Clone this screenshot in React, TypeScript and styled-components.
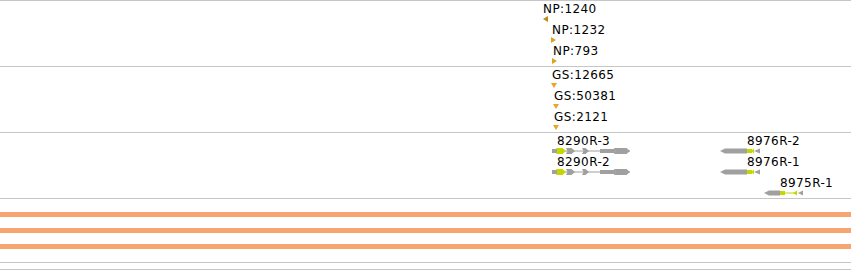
import React from "react";
import styled, { createGlobalStyle } from "styled-components";

const GlobalStyle = createGlobalStyle`
  html, body { margin: 0; padding: 0; background: #ffffff; }
  body { font-family: "DejaVu Sans", "Liberation Sans", sans-serif; }
`;

const GRAY = "#a0a0a0";
const LIME = "#c4d800";
const ROW = 21;
const GH = 6;
const MID = GH / 2;

type Shape =
  | { t: "poly"; pts: string; c: string }
  | { t: "rect"; x: number; w: number; c: string }
  | { t: "line"; x1: number; x2: number; c: string };

type Feature = {
  label: string;
  lx: number;
  gx: number;
  row: number;
  gw: number;
  gh: number;
  gap: number;
  shapes: Shape[];
  intron?: { x1: number; x2: number };
};

/* forward exon: chevron-like arrow pointing right */
const fwd = (x0: number, x1: number, c: string): Shape => ({
  t: "poly",
  pts: `${x0},0 ${x1 - 3.5},0 ${x1},${MID} ${x1 - 3.5},${GH} ${x0},${GH} ${x0 + 1.5},${MID}`,
  c,
});
const taperL = (x0: number, x1: number, c: string): Shape => ({
  t: "poly",
  pts: `${x0},${MID} ${x0 + 5},0.5 ${x1},0.5 ${x1},${GH - 0.5} ${x0 + 5},${GH - 0.5}`,
  c,
});
const triL = (x0: number, x1: number, c: string): Shape => ({
  t: "poly",
  pts: `${x1},0.5 ${x0},${MID} ${x1},${GH - 0.5}`,
  c,
});

const marker = (
  label: string,
  lx: number,
  gx: number,
  row: number,
  dir: "left" | "right" | "down",
  c: string
): Feature => {
  const pts =
    dir === "left" ? "5,0 0,3 5,6" : dir === "right" ? "0,0 5,3 0,6" : "0,0 6,0 3,5";
  return {
    label,
    lx,
    gx,
    row,
    gw: dir === "down" ? 6 : 5,
    gh: dir === "down" ? 5 : 6,
    gap: dir === "down" ? 1 : 0,
    shapes: [{ t: "poly", pts, c }],
  };
};

const gene8290 = (label: string, row: number): Feature => ({
  label,
  lx: 557,
  gx: 552,
  row,
  gw: 80,
  gh: GH,
  gap: 0,
  intron: { x1: 2, x2: 78 },
  shapes: [
    { t: "rect", x: 0, w: 5, c: GRAY },
    fwd(4, 14, LIME),
    fwd(14, 23, GRAY),
    fwd(30, 37, GRAY),
    { t: "rect", x: 48, w: 15, c: GRAY },
    fwd(62, 78, GRAY),
  ],
});

const gene8976 = (label: string, row: number): Feature => ({
  label,
  lx: 747,
  gx: 720,
  row,
  gw: 40,
  gh: GH,
  gap: 0,
  shapes: [
    taperL(0, 27, GRAY),
    { t: "rect", x: 27, w: 5, c: LIME },
    triL(31, 34, LIME),
    triL(34, 40, GRAY),
  ],
});

const gene8975: Feature = {
  label: "8975R-1",
  lx: 780,
  gx: 764,
  row: 2,
  gw: 40,
  gh: GH,
  gap: 0,
  shapes: [
    taperL(0, 16, GRAY),
    { t: "rect", x: 16, w: 5, c: LIME },
    { t: "line", x1: 21, x2: 31, c: LIME },
    triL(29, 33, LIME),
    triL(34, 39, GRAY),
  ],
};

const featureTracks: Feature[][] = [
  [
    marker("NP:1240", 543, 543, 0, "left", "#bf8a14"),
    marker("NP:1232", 552, 551, 1, "right", "#e0a01c"),
    marker("NP:793", 553, 552, 2, "right", "#e0a01c"),
  ],
  [
    marker("GS:12665", 552, 551, 0, "down", "#eda326"),
    marker("GS:50381", 554, 553, 1, "down", "#eda326"),
    marker("GS:2121", 554, 553, 2, "down", "#eda326"),
  ],
  [gene8290("8290R-3", 0), gene8976("8976R-2", 0), gene8290("8290R-2", 1), gene8976("8976R-1", 1), gene8975],
];

const Browser = styled.div`
  width: 851px;
  display: flex;
  flex-direction: column;
`;

const Track = styled.section<{ $h: number }>`
  position: relative;
  box-sizing: border-box;
  height: ${(p) => p.$h}px;
  border-top: 1px solid #c6c6c6;
  overflow: hidden;
`;

const BarTrack = styled(Track)`
  display: flex;
  flex-direction: column;
  gap: 11px;
  padding-top: 13px;
`;

const CoverageBar = styled.div`
  height: 5px;
  width: 100%;
  background: #f6a571;
`;

const FeatureBox = styled.div<{ $left: number; $top: number }>`
  position: absolute;
  left: ${(p) => p.$left}px;
  top: ${(p) => p.$top}px;
  display: flex;
  flex-direction: column;
  align-items: flex-start;
`;

const Label = styled.span<{ $dx: number }>`
  display: block;
  margin-left: ${(p) => p.$dx}px;
  font-family: "DejaVu Sans", "Liberation Sans", sans-serif;
  font-size: 12px;
  line-height: 14px;
  letter-spacing: 0.4px;
  color: #000;
  white-space: nowrap;
`;

const Glyph = styled.svg<{ $dx: number; $gap: number }>`
  display: block;
  margin-left: ${(p) => p.$dx}px;
  margin-top: ${(p) => p.$gap}px;
  overflow: visible;
`;

const FeatureView: React.FC<{ f: Feature }> = ({ f }) => {
  const left = Math.min(f.lx, f.gx);
  return (
    <FeatureBox $left={left} $top={1 + f.row * ROW}>
      <Label $dx={f.lx - left}>{f.label}</Label>
      <Glyph
        $dx={f.gx - left}
        $gap={f.gap}
        width={f.gw}
        height={f.gh}
        viewBox={`0 0 ${f.gw} ${f.gh}`}
      >
        {f.intron && (
          <line x1={f.intron.x1} x2={f.intron.x2} y1={MID} y2={MID} stroke={GRAY} strokeWidth={1} />
        )}
        {f.shapes.map((s, i) =>
          s.t === "poly" ? (
            <polygon key={i} points={s.pts} fill={s.c} />
          ) : s.t === "rect" ? (
            <rect key={i} x={s.x} y={1} width={s.w} height={GH - 2} fill={s.c} shapeRendering="crispEdges" />
          ) : (
            <line key={i} x1={s.x1} x2={s.x2} y1={MID} y2={MID} stroke={s.c} strokeWidth={1} />
          )
        )}
      </Glyph>
    </FeatureBox>
  );
};

export default function App() {
  return (
    <>
      <GlobalStyle />
      <Browser>
        {featureTracks.map((feats, i) => (
          <Track key={i} $h={66}>
            {feats.map((f) => (
              <FeatureView key={f.label} f={f} />
            ))}
          </Track>
        ))}
        <BarTrack $h={64}>
          <CoverageBar />
          <CoverageBar />
          <CoverageBar />
        </BarTrack>
        <Track $h={7} />
        <Track $h={1} />
      </Browser>
    </>
  );
}
